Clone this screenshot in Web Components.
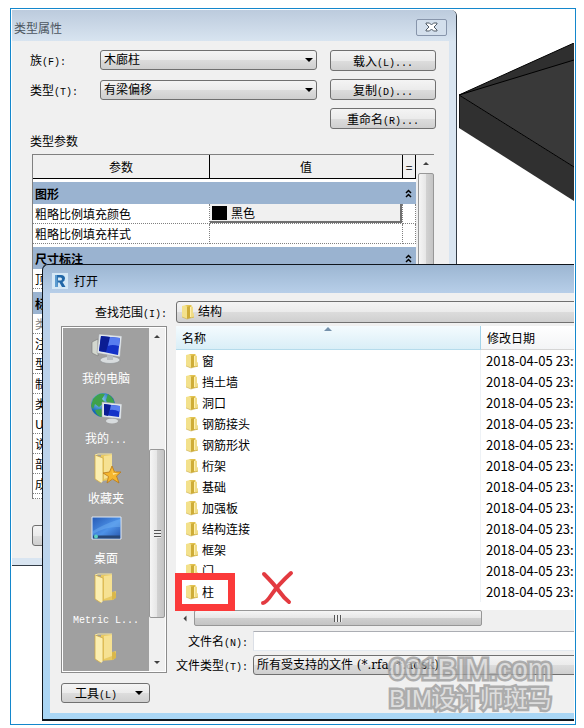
<!DOCTYPE html>
<html lang="zh-CN">
<head>
<meta charset="utf-8">
<meta name="viewport" content="width=device-width, initial-scale=1">
<title>类型属性</title>
<style>
  body {
    margin: 8px 8px 0 10px;
    background: #fff;
    color: #000;
    font: 12px/16px "Noto Sans CJK SC", sans-serif;
  }
</style>
</head>
<body>
<revit-desktop>
  <solid-model></solid-model>
  <type-window></type-window>
  <open-window></open-window>
  <water-mark></water-mark>
</revit-desktop>

<script>
/* base: clones the static html of each class into its shadow root */
class BaseElement extends HTMLElement {
  constructor() {
    super();
    this.attachShadow({ mode: "open" });
  }

  connectedCallback() {
    const templateElement = document.createElement("template");
    templateElement.innerHTML = this.render();
    this.shadowRoot.replaceChildren(templateElement.content.cloneNode(true));
  }
}

/* revit-desktop: blue frame, every child shares one grid cell */
class RevitDesktop extends BaseElement {
  render() {
    return `
<style>
  :host {
    display: grid;
    grid-template-columns: minmax(0, 1fr);
    border: 1px solid #1487cc;
    padding: 1px 1px 3px 1px;
    overflow: hidden;
  }
  ::slotted(*) { grid-area: 1 / 1; }
  ::slotted(solid-model) { justify-self: end; align-self: start; margin-top: 33px; }
  ::slotted(type-window) { align-self: start; margin-right: 117px; }
  ::slotted(open-window) { margin: 254px 0 0 30px; z-index: 1; }
  ::slotted(water-mark) { justify-self: end; align-self: end; margin: 0 22px 8px 0; z-index: 2; }
</style>
<slot></slot>`;
  }
}

/* solid-model: corner of the 3D slab behind the windows */
class SolidModel extends BaseElement {
  render() {
    return `
<style>
  :host { display: block; }
  svg { display: block; }
</style>
<svg width="115" height="159" viewBox="0 0 115 159" aria-hidden="true">
  <path d="M0 52 115 0V124Z" fill="#2f2f2f"/>
  <path d="M0 52 115 17V124Z" fill="#393939"/>
  <path d="M0 52 115 124V158L0 85Z" fill="#303030"/>
  <path d="M115 0 0 52 115 17M0 52 115 124M0 52V85" fill="none" stroke="#000"/>
</svg>`;
  }
}

/*
win-field
atributos: label, key, value, text (caja de texto en vez de lista)
*/
class WinField extends BaseElement {
  render() {
    const label = this.getAttribute("label");
    const key = this.getAttribute("key");
    const value = this.getAttribute("value");
    const control = this.hasAttribute("text")
      ? `<input id="control" type="text">`
      : `<select id="control"><option>${value}</option></select>`;
    return `
<style>
  :host { display: flex; align-items: center; height: 20px; }
  label { flex: none; width: var(--label-width, 70px); box-sizing: border-box; text-align: var(--label-align, left); padding-right: var(--label-gap, 0); white-space: nowrap; }
  label span { font: 10px "Liberation Mono", monospace; }
  .box { flex: 1; min-width: 0; height: 100%; display: grid; grid-template-rows: 100%; align-items: center; }
  .box > *, ::slotted(*) { grid-area: 1 / 1; }
  select, input {
    box-sizing: border-box; width: 100%; height: 100%; margin: 0; padding: 0 3px;
    font: 12px "DejaVu Serif", "Noto Sans CJK SC", serif; color: #000;
    border: 1px solid #707070; border-radius: 3px; appearance: none;
    background: linear-gradient(#f4f4f4, #ebebeb 50%, #dcdcdc 51%, #cfcfcf);
    padding-left: var(--indent, 3px);
  }
  input { background: #fff; border-color: #abadb3 #e2e3ea #e3e9ef #dbdfe6; border-radius: 0; }
  .arrow { justify-self: end; margin-right: 4px; border: 4px solid transparent; border-top-color: #000; border-bottom: 0; pointer-events: none; }
  ::slotted(*) { justify-self: start; margin-left: 5px; pointer-events: none; z-index: 1; }
</style>
<label for="control">${label}<span>(${key}):</span></label>
<div class="box">${control}<slot></slot>${this.hasAttribute("text") ? "" : `<span class="arrow"></span>`}</div>`;
  }
}

/* win-button: text in the slot, key letter as attribute */
class WinButton extends BaseElement {
  render() {
    const key = this.getAttribute("key");
    const name = this.getAttribute("name");
    return `
<style>
  :host { display: block; height: 21px; }
  button {
    box-sizing: border-box; width: 100%; height: 100%; padding: 0 6px;
    display: flex; align-items: center; justify-content: center; white-space: nowrap;
    font: inherit; color: #000; border: 1px solid #707070; border-radius: 3px;
    background: linear-gradient(#f4f4f4, #ebebeb 50%, #dddddd 51%, #cfcfcf);
  }
  button span { font: 10px "Liberation Mono", monospace; }
  :host([menu]) button { justify-content: space-between; padding-left: 13px; }
  i { display: none; border: 4px solid transparent; border-top-color: #000; border-bottom: 0; }
  :host([menu]) i { display: block; }
</style>
<button type="button"${name ? ` aria-label="${name}"` : ""}><div><slot></slot>${key ? `<span>${key}</span>` : ""}</div><i></i></button>`;
  }
}

/*
scroll-bar
atributos: before, thumb, after (proporciones), horizontal
*/
class ScrollBar extends BaseElement {
  render() {
    const grow = (name) => this.getAttribute(name) || 0;
    return `
<style>
  :host { display: flex; flex-direction: column; width: 16px; background: #f0f0f0; }
  :host([horizontal]) { flex-direction: row; width: auto; height: 16px; }
  .end { flex: 0 0 17px; display: grid; place-items: center; }
  .end i { border: 3px solid transparent; border-bottom-color: #404040; border-top: 0; }
  .end:last-child i { transform: rotate(180deg); }
  :host([horizontal]) .end i { transform: rotate(-90deg); }
  :host([horizontal]) .end:last-child i { transform: rotate(90deg); }
  .thumb {
    box-sizing: border-box; display: grid; place-items: center;
    border: 1px solid #979797; border-radius: 2px;
    background: linear-gradient(90deg, #f5f5f5, #e6e6e6 50%, #d2d2d2 51%, #c4c4c4);
  }
  :host([horizontal]) .thumb { background: linear-gradient(#f5f5f5, #e6e6e6 50%, #d0d0d0 51%, #c4c4c4); }
  .grip { width: 7px; height: 8px; background: repeating-linear-gradient(#555 0 1px, #eee 1px 3px); }
  :host([horizontal]) .grip { width: 8px; height: 7px; background: repeating-linear-gradient(90deg, #555 0 1px, #eee 1px 3px); }
  :host([plain]) .grip { display: none; }
</style>
<div class="end"><i></i></div>
<div style="flex: ${grow("before")}"></div>
<div class="thumb" style="flex: ${grow("thumb")}"><div class="grip"></div></div>
<div style="flex: ${grow("after")}"></div>
<div class="end"><i></i></div>`;
  }
}

/* param-table: parameter groups with their rows */
class ParamTable extends BaseElement {
  render() {
    const group = (name) => `<tr class="group"><th colspan="2" scope="colgroup">${name}</th><td><svg width="7" height="9" viewBox="0 0 7 9"><path d="M1 4 3.500 1.500 6 4M1 8 3.500 5.500 6 8" fill="none" stroke="#000" stroke-width="1.500"/></svg></td></tr>`;
    const row = (name, value = "") => `<tr><td>${name}</td><td>${value}</td><td></td></tr>`;
    const swatch = `<button type="button"><i></i>黑色</button>`;
    return `
<style>
  :host { display: flex; border: 1px solid #808080; border-width: 1px 0 0 1px; }
  table { flex: 1; min-width: 0; table-layout: fixed; border-collapse: separate; border-spacing: 0; background: #fff; margin-right: 2px; }
  td, th { box-sizing: border-box; height: 20px; padding: 0 0 0 2px; line-height: 18px; text-align: left; white-space: nowrap; overflow: hidden; border: 0 dotted #808080; border-width: 0 1px 1px 0; }
  thead th { height: 24px; padding: 0; text-align: center; font-weight: 400; background: #f0f0f0; border: 0 solid #000; border-width: 0 1px 1px 0; }
  .group th, .group td { height: 25px; line-height: 21px; background: #9ab3d0; border: 0 solid #fff; border-top-width: 3px; }
  .dim td { color: #808080; }
  .last td { height: 5px; line-height: 4px; }
  svg { display: block; }
  button { box-sizing: border-box; display: flex; align-items: center; gap: 4px; width: 100%; height: 19px; padding: 0 0 0 2px; font: inherit; color: #000; background: #f0f0f0; border: 0 solid #707070; border-width: 0 2px 2px 0; }
  button i { width: 15px; height: 14px; background: #000; }
  td:has(button) { padding: 0; }
</style>
<table>
  <colgroup><col style="width: 177px"><col><col style="width: 13px"></colgroup>
  <thead><tr><th scope="col">参数</th><th scope="col">值</th><th scope="col">=</th></tr></thead>
  <tbody>
    ${group("图形")}${row("粗略比例填充颜色", swatch)}${row("粗略比例填充样式")}
    ${group("尺寸标注")}${row("顶")}
    ${group("标")}${row("类").replace("<tr>", `<tr class="dim">`)}
    ${["注", "型", "制", "类", "U", "说", "部", "成"].map((name) => row(name)).join("")}
    <tr class="last"><td></td><td></td><td></td></tr>
  </tbody>
</table>
<scroll-bar plain before="1" thumb="240" after="70"></scroll-bar>`;
  }
}

/* type-window: back dialog */
class TypeWindow extends BaseElement {
  render() {
    return `
<style>
  :host { display: block; background: #d9e5f1; border: 0 solid #333c47; border-width: 0 1px 1px 0; border-radius: 0 6px 0 0; padding: 0 7px 7px 0; overflow: hidden; }
  header { display: flex; align-items: center; justify-content: space-between; height: 31px; padding: 0 9px 0 2px; margin-right: -7px; background: linear-gradient(#bccbdd, #d8e4f0); color: #4c5560; }
  h1 { margin: 4px 0 0; font: inherit; }
  .close { width: 31px; height: 17px; margin-top: 3px; padding: 0; display: grid; place-items: center; border: 1px solid #8795ab; border-radius: 2px; background: #d3dfec; }
  main { display: flex; flex-direction: column; background: #f0f0f0; padding: 9px 13px 12px 18px; }
  .top { display: flex; gap: 13px; }
  .fields { flex: 1; min-width: 0; display: flex; flex-direction: column; gap: 10px; }
  .buttons { flex: none; width: 106px; display: flex; flex-direction: column; gap: 8px; }
  h2 { margin: 4px 0 5px; font: inherit; }
  param-table { margin: 0 2px 26px; }
  .preview { width: 88px; margin-left: 2px; }
</style>
<header><h1>类型属性</h1>
  <button class="close" type="button" aria-label="关闭"><svg width="13" height="10" viewBox="0 0 13 10"><path d="M1 1H4.500L6.500 3 8.500 1H12V2L9 5 12 8V9H8.500L6.500 7 4.500 9H1V8L4 5 1 2Z" fill="#fff" stroke="#4f5a66"/></svg></button>
</header>
<main>
  <div class="top">
    <div class="fields">
      <win-field label="族" key="F" value="木廊柱"></win-field>
      <win-field label="类型" key="T" value="有梁偏移"></win-field>
    </div>
    <div class="buttons">
      <win-button key="(L)...">载入</win-button>
      <win-button key="(D)...">复制</win-button>
      <win-button key="(R)...">重命名</win-button>
    </div>
  </div>
  <h2>类型参数</h2>
  <param-table></param-table>
  <win-button class="preview" name="预览"></win-button>
</main>`;
  }
}

/* folder-icon: small open folder */
class FolderIcon extends BaseElement {
  render() {
    return `
<style>
  :host { display: block; flex: none; }
  svg { display: block; }
</style>
<svg width="14" height="16" viewBox="0 0 14 16" aria-hidden="true">
  <path d="M4 1H10.500V9.500H12.500V14H5Z" fill="#e2c351"/>
  <path d="M10 2 12 3V9L13 10V13L10 14Z" fill="#f0dc87"/>
  <path d="M1 2 5 1 6 3V15L1 13Z" fill="#f3e18c"/>
  <path d="M6 3 9 2V14L6 15Z" fill="#ceac37"/>
  <path d="M9 3H10V13H9Z" fill="#fff0ad"/>
  <path d="M1 13 6 15 13 13" fill="none" stroke="#c9ad4b" stroke-width=".6"/>
</svg>`;
  }
}

const folderShape = `
  <path d="M11 3 21 2Q22 2 22 3V20L26 19V25L23 28 9 29Z" fill="#e9ca62"/>
  <path d="M14 4 22 3V24L14 27Z" fill="#f6e192"/>
  <path d="M22 20H25L26 22V26L22 28Z" fill="#d9b74b"/>
  <path d="M5 3 13 6V29L11 31 5 27Z" fill="#fbeeb0"/>
  <path d="M5 3 13 6V29M5 3V27L11 31" fill="none" stroke="#d0aa45" stroke-width=".8"/>
  <path d="M5 3 8 2 22 2" fill="none" stroke="#f5e6a1"/>`;

const screenShape = `
  <path d="M2 10 8 7V24L2 21Z" fill="#d3d7cf" stroke="#777" stroke-width=".6"/>
  <ellipse cx="20" cy="28" rx="10" ry="3.500" fill="#d8dcde" stroke="#8b9093" stroke-width=".6"/>
  <path d="M17 22H23V28H17Z" fill="#b9bec2"/>
  <path d="M9 2 32 4 30 25 7 21Z" fill="#dfe5ea" stroke="#999" stroke-width=".5"/>
  <path d="M11 4 30 6 28 23 9 19Z" fill="#1432c8"/>
  <path d="M11 4 20 5 16 20 9 19Z" fill="#0b1d93"/>
  <path d="M20 5 30 6 29 14Q22 12 18 14Z" fill="#587df0"/>`;

const placeShapes = {
  computer: screenShape,
  network: `
  <defs><radialGradient id="globe" cx=".35" cy=".3"><stop offset="0" stop-color="#a5e2ff"/><stop offset="1" stop-color="#1668b7"/></radialGradient></defs>
  <circle cx="13" cy="13" r="12" fill="url(#globe)"/>
  <path d="M3 7Q9 0 15 2L12 7 15 10 9 15 5 12 3 17 1 14ZM18 2Q24 6 24 11L18 13 16 8ZM5 18 11 17 14 22 11 25Q6 23 5 18Z" fill="#3fa14b"/>
  <ellipse cx="22" cy="29" rx="6" ry="2.500" fill="#d8dcde"/>
  <path d="M12 10 32 12 31 27 12 25Z" fill="#dfe5ea" stroke="#999" stroke-width=".5"/>
  <path d="M14 12 30 14 29 25 14 23Z" fill="#1432c8"/>
  <path d="M14 12 21 13 18 24 14 23Z" fill="#0b1d93"/>
  <path d="M21 13 30 14 30 20Q24 17 20 18Z" fill="#587df0"/>`,
  favorite: `${folderShape}
  <path d="M22 14 24.500 20 31 20 26.500 24 29 31 22.500 27 17 31 18.500 24.500 13 21 19.500 20Z" fill="#f5b62e" stroke="#b9791b" stroke-width=".8"/>
  <path d="M22 16 23 21 28 21 23 23Z" fill="#ffe28c"/>`,
  desktop: `
  <defs><linearGradient id="sky" x2="1" y2="1"><stop offset="0" stop-color="#2559b4"/><stop offset=".55" stop-color="#4d92e8"/><stop offset="1" stop-color="#2452a8"/></linearGradient></defs>
  <path d="M2 5H31V27H2Z" fill="url(#sky)" stroke="#dfe9f5"/>
  <path d="M3 23.500H30V26.500H3Z" fill="#274777"/>
  <circle cx="6" cy="24.500" r="2" fill="#5ad0c0"/>
  <path d="M3 19Q14 12 30 7V15Q16 14 3 22Z" fill="#73b3f4" opacity=".45"/>`,
  folder: folderShape,
};

/* place-item: big icon with caption in the slot */
class PlaceItem extends BaseElement {
  render() {
    return `
<style>
  :host { box-sizing: border-box; display: flex; flex-direction: column; align-items: center; gap: 6px; height: 60px; padding-top: 4px; color: #fff; white-space: nowrap; }
  :host(:last-child) { height: 43px; }
  svg { display: block; flex: none; }
</style>
<svg width="32" height="32" viewBox="0 0 32 32" aria-hidden="true">${placeShapes[this.getAttribute("icon")]}</svg>
<div><slot></slot></div>`;
  }
}

/* places-bar: shortcuts column with its scroll bar */
class PlacesBar extends BaseElement {
  render() {
    return `
<style>
  :host { display: flex; border: 1px solid #8c8c8c; padding: 1px; background: #fff; }
  nav { flex: 1; background: #a0a0a0; }
  nav span { font: 10px "Liberation Mono", monospace; }
</style>
<nav>
  <place-item icon="computer">我的电脑</place-item>
  <place-item icon="network">我的<span>...</span></place-item>
  <place-item icon="favorite">收藏夹</place-item>
  <place-item icon="desktop">桌面</place-item>
  <place-item icon="folder"><span>Metric L...</span></place-item>
  <place-item icon="folder"></place-item>
</nav>
<scroll-bar before="105" thumb="169" after="36"></scroll-bar>`;
  }
}

/* file-list: folders table, the marked row carries the red frame and cross */
class FileList extends BaseElement {
  render() {
    const names = ["窗", "挡土墙", "洞口", "钢筋接头", "钢筋形状", "桁架", "基础", "加强板", "结构连接", "框架", "门", "柱"];
    const mark = `<div class="mark"></div><svg class="cross" width="34" height="36" viewBox="0 0 34 36" aria-hidden="true"><path d="M4 4Q14 14 19 21T29 32M31 3Q18 15 12 24T3 33" fill="none" stroke="#e33a40" stroke-width="4" stroke-linecap="round"/></svg>`;
    const rows = names.map((name) => `<tr><td><div class="name"><folder-icon></folder-icon>${name}${name === "柱" ? mark : ""}</div></td><td class="date">2018-04-05 23:</td></tr>`);
    return `
<style>
  :host { display: block; background: #fff; padding-bottom: 8px; }
  table { width: 100%; table-layout: fixed; border-collapse: separate; border-spacing: 0; }
  th { box-sizing: border-box; height: 24px; padding: 0 6px; text-align: left; font-weight: 400; background: linear-gradient(#fff, #f3f4f6); border-bottom: 1px solid #d5d5d5; }
  th:first-child { position: relative; background: linear-gradient(#f4fbfe, #d9eef7); border-right: 1px solid #a3d3ea; border-bottom-color: #b5dbeb; }
  th i { position: absolute; top: 1px; left: 50%; margin-left: -4px; border: 4px solid transparent; border-bottom-color: #7591ab; border-top: 0; }
  td { height: 21px; padding: 0; line-height: 21px; white-space: nowrap; }
  td:first-child { border-right: 1px solid #eef2f6; }
  .name { position: relative; display: flex; align-items: center; gap: 3px; padding-left: 9px; }
  .date { padding-left: 5px; font-size: 13px; }
  .mark { position: absolute; left: -1px; top: -8px; box-sizing: border-box; width: 60px; height: 38px; border: 7px solid #fb3a3a; }
  .cross { position: absolute; left: 84px; top: -11px; }
</style>
<table>
  <colgroup><col style="width: 305px"><col></colgroup>
  <thead><tr><th scope="col">名称<i></i></th><th scope="col">修改日期</th></tr></thead>
  <tbody>${rows.join("")}</tbody>
</table>`;
  }
}

/* open-window: front dialog, runs past the right edge of the frame */
class OpenWindow extends BaseElement {
  render() {
    return `
<style>
  :host { display: block; border: 1px solid #10161d; border-width: 1px 0 2px 1px; border-radius: 6px 0 0 0; padding: 0 0 6px 7px; background: linear-gradient(#9cb6d2, #b9d0ea 30px, #bfd5ec 60%, #a9d6f5); overflow: hidden; }
  header { box-sizing: border-box; display: flex; align-items: center; gap: 6px; height: 28px; padding: 4px 0 0 2px; }
  h1 { margin: 0; font: inherit; }
  header svg { display: block; }
  main { background: #f0f0f0; padding: 8px 0 10px 11px; display: flex; flex-direction: column; gap: 3px; overflow: hidden; }
  .look { height: 22px; margin-right: -24px; --label-width: 115px; --label-align: right; --label-gap: 9px; --indent: 21px; }
  .columns { display: grid; grid-template-columns: 106px minmax(0, 1fr); gap: 9px; }
  .left, .right { display: flex; flex-direction: column; }
  .left { gap: 10px; }
  .tools { width: 89px; height: 20px; }
  .right win-field { margin-right: -24px; --label-width: 77px; --label-align: right; --label-gap: 5px; }
  scroll-bar { margin: 0 -24px 5px 0; }
  .right win-field + win-field { margin-top: 4px; }
  .right file-list { z-index: 1; }
</style>
<header>
  <svg width="16" height="16" viewBox="0 0 16 16" aria-hidden="true"><path d="M0 0H16V16H0Z" fill="#d5e8f6"/><path d="M3 2H9Q13 2 13 5.500 13 8 10.500 9L13.500 14H10L7.500 9.500H6V14H3ZM6 4.500V7.500H8.500Q10 7.500 10 6T8.500 4.500Z" fill="#2167a8" fill-rule="evenodd"/><path d="M3 2H5L6 14H3Z" fill="#5b9bd0"/></svg>
  <h1>打开</h1>
</header>
<main>
  <win-field class="look" label="查找范围" key="I" value="结构"><folder-icon></folder-icon></win-field>
  <div class="columns">
    <div class="left">
      <places-bar></places-bar>
      <win-button class="tools" menu key="(L)">工具</win-button>
    </div>
    <div class="right">
      <file-list></file-list>
      <scroll-bar horizontal before="1" thumb="287" after="100"></scroll-bar>
      <win-field label="文件名" key="N" text></win-field>
      <win-field label="文件类型" key="T" value="所有受支持的文件 (*.rfa, *.adsk)"></win-field>
    </div>
  </div>
</main>`;
  }
}

/* water-mark: outlined site name over the lower right corner */
class WaterMark extends BaseElement {
  render() {
    return `
<style>
  :host { display: block; font-family: "Liberation Sans", "Noto Sans CJK SC", sans-serif; color: #dadada; -webkit-text-stroke: 5px #9c9c9c; paint-order: stroke fill; opacity: .8; white-space: nowrap; pointer-events: none; }
  p { margin: 0; }
  .site { font-size: 29px; line-height: 32px; }
  .name { font-size: 24px; line-height: 28px; }
</style>
<p class="site">001BIM.com</p>
<p class="name">BIM设计师斑马</p>`;
  }
}

customElements.define("revit-desktop", RevitDesktop);
customElements.define("solid-model", SolidModel);
customElements.define("win-field", WinField);
customElements.define("win-button", WinButton);
customElements.define("scroll-bar", ScrollBar);
customElements.define("param-table", ParamTable);
customElements.define("type-window", TypeWindow);
customElements.define("folder-icon", FolderIcon);
customElements.define("place-item", PlaceItem);
customElements.define("places-bar", PlacesBar);
customElements.define("file-list", FileList);
customElements.define("open-window", OpenWindow);
customElements.define("water-mark", WaterMark);
</script>
</body>
</html>
